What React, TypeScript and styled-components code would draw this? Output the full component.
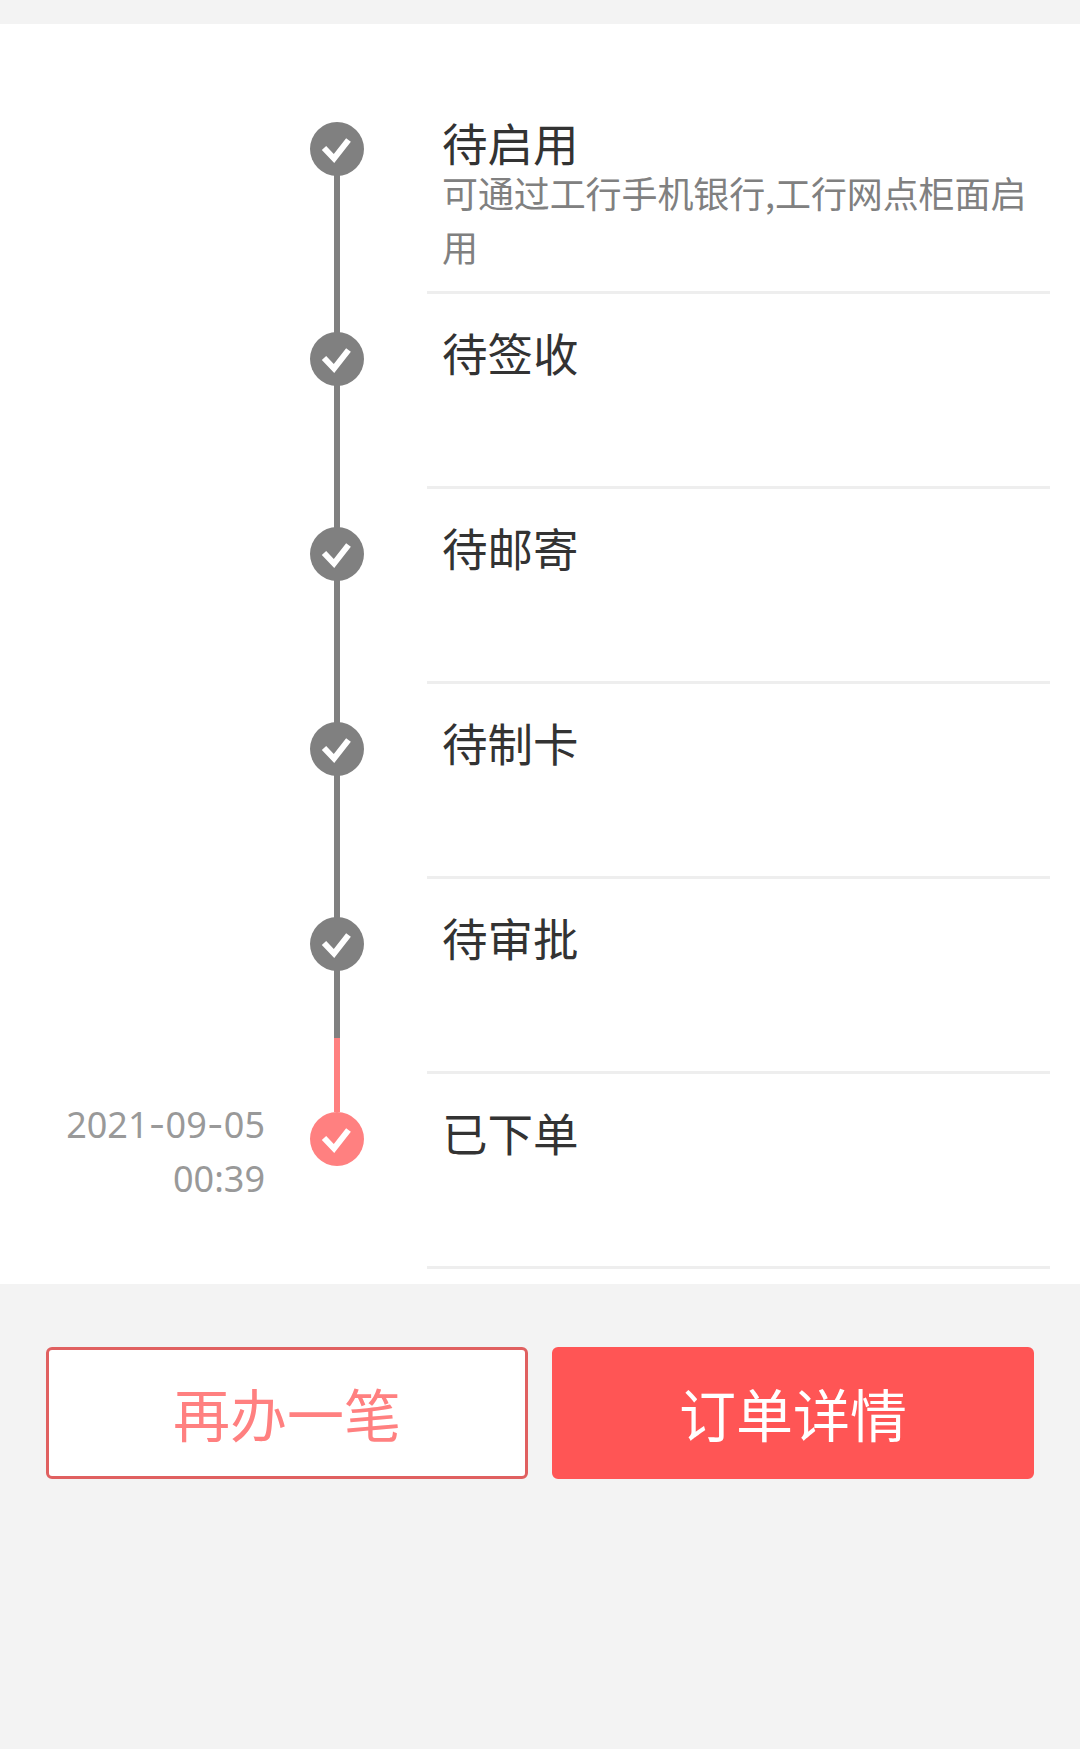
import React from "react";
import styled, { createGlobalStyle } from "styled-components";

const Global = createGlobalStyle`
  html, body { margin: 0; padding: 0; background: #f3f3f3; }
  body { font-family: "Noto Sans CJK SC", "Noto Sans", sans-serif; }
`;

const Page = styled.div`
  width: 1080px;
  height: 1749px;
  padding-top: 24px;
  box-sizing: border-box;
  background: #f3f3f3;
  overflow: hidden;
`;

const Panel = styled.section`
  height: 1260px;
  padding-top: 60px;
  box-sizing: border-box;
  background: #ffffff;
`;

const Row = styled.div`
  display: grid;
  grid-template-columns: 265px 54px 1fr;
  column-gap: 45px;
  padding-right: 30px;
  position: relative;
`;

const Time = styled.div`
  padding: 24px 0 0 30px;
  font-family: "Noto Sans", sans-serif;
  font-size: 36px;
  line-height: 53px;
  color: #999999;
  text-align: right;
`;

const Dash = styled.span`
  display: inline-block;
  margin: 0 0.25px;
  font-family: "Inter", sans-serif;
`;

const Axis = styled.div`
  position: relative;
  padding-top: 38px;
`;

const Connector = styled.div<{ $top: number; $height: number; $active?: boolean }>`
  position: absolute;
  left: 24px;
  top: ${(p) => p.$top}px;
  width: 6px;
  height: ${(p) => p.$height}px;
  background: ${(p) => (p.$active ? "#ff8080" : "#808080")};
`;

const Node = styled.div<{ $active?: boolean }>`
  position: relative;
  width: 54px;
  height: 54px;
  border-radius: 50%;
  background: ${(p) => (p.$active ? "#ff8080" : "#808080")};
  display: flex;

  svg {
    display: block;
  }
`;

const Content = styled.div`
  margin-left: 18px;
  min-height: 195px;
  box-sizing: border-box;
  padding: 35px 16px 18px 15px;
  border-bottom: 3px solid #eeeeee;
`;

const Title = styled.div`
  font-size: 45.5px;
  line-height: 46px;
  color: #333333;
`;

const Description = styled.div`
  font-size: 36px;
  letter-spacing: -0.1px;
  line-height: 54px;
  color: #808080;
`;

const Actions = styled.div`
  display: flex;
  gap: 24px;
  padding: 63px 46px 0;
`;

const Button = styled.button<{ $primary?: boolean }>`
  flex: 1;
  height: 132px;
  box-sizing: border-box;
  margin: 0;
  padding: 0 0 2px;
  border-radius: 6px;
  border: 3px solid ${(p) => (p.$primary ? "#ff5555" : "#e06060")};
  background: ${(p) => (p.$primary ? "#ff5555" : "#ffffff")};
  color: ${(p) => (p.$primary ? "#ffffff" : "#ff8080")};
  font-family: "Noto Sans CJK SC", sans-serif;
  font-size: 57px;
  line-height: 1;
`;

const Check = () => (
  <svg width="54" height="54" viewBox="0 0 54 54" fill="none">
    <path d="M14 26L24 36.5L38.5 18" stroke="#ffffff" strokeWidth="6" />
  </svg>
);

type Step = {
  title: string;
  description?: string;
  time?: string[];
  active?: boolean;
  line: { top: number; height: number };
};

const steps: Step[] = [
  { title: "待启用", description: "可通过工行手机银行,工行网点柜面启用", line: { top: 65, height: 210 } },
  { title: "待签收", line: { top: 65, height: 195 } },
  { title: "待邮寄", line: { top: 65, height: 195 } },
  { title: "待制卡", line: { top: 65, height: 195 } },
  { title: "待审批", line: { top: 65, height: 94 } },
  { title: "已下单", time: ["2021", "09", "05 00:39"], active: true, line: { top: -36, height: 74 } },
];

export default function App() {
  return (
    <Page>
      <Global />
      <Panel>
        {steps.map((s) => (
          <Row key={s.title}>
            <Time>
              {s.time?.map((part, i) => (
                <React.Fragment key={part}>
                  {i > 0 && <Dash>-</Dash>}
                  {part}
                </React.Fragment>
              ))}
            </Time>
            <Axis>
              <Connector $top={s.line.top} $height={s.line.height} $active={s.active} />
              <Node $active={s.active}>
                <Check />
              </Node>
            </Axis>
            <Content>
              <Title>{s.title}</Title>
              {s.description && <Description>{s.description}</Description>}
            </Content>
          </Row>
        ))}
      </Panel>
      <Actions>
        <Button>再办一笔</Button>
        <Button $primary>订单详情</Button>
      </Actions>
    </Page>
  );
}
